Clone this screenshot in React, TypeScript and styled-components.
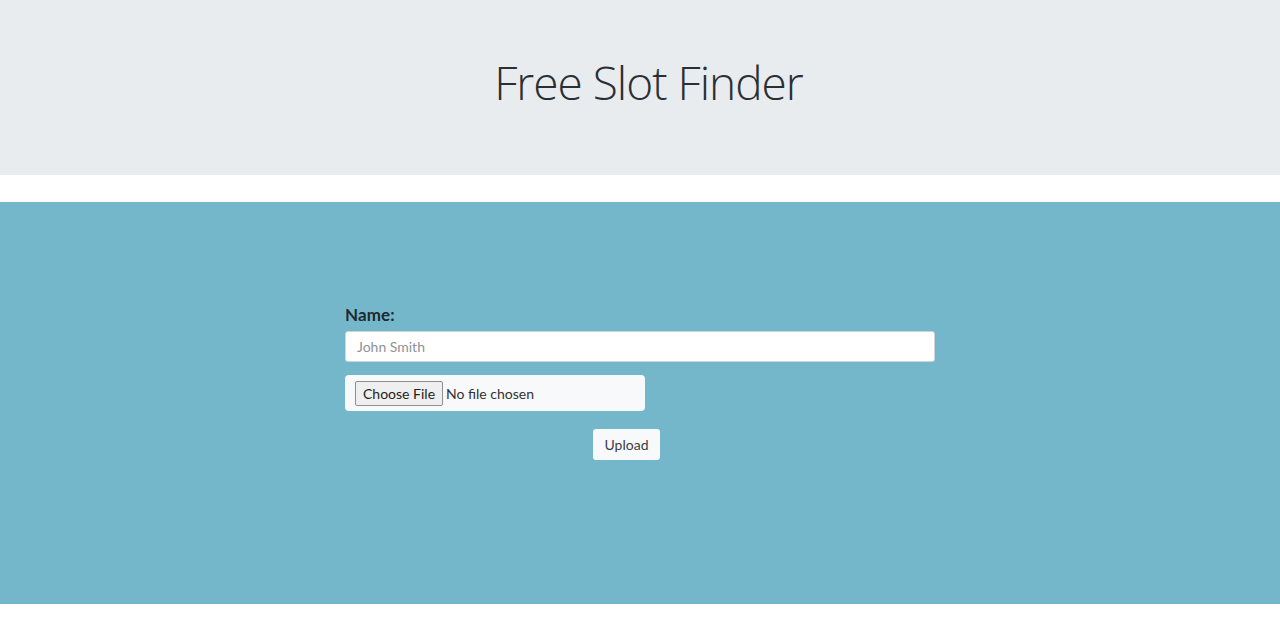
import React from "react";
import styled, { createGlobalStyle } from "styled-components";

const Global = createGlobalStyle`
  html, body { margin: 0; padding: 0; background: #fff; }
  body { font-family: "Lato", "Noto Sans", sans-serif; color: #212529; }
  * { box-sizing: border-box; }
`;

const Page = styled.div`
  display: flex;
  flex-direction: column;
  width: 1280px;
`;

const Jumbotron = styled.header`
  background: #e9ecef;
  height: 175px;
  display: flex;
  align-items: center;
  justify-content: center;
  padding-left: 17px;
  padding-bottom: 10px;
  margin-bottom: 27px;
`;

const Title = styled.h1`
  margin: 0;
  font-family: "Open Sans", sans-serif;
  font-weight: 300;
  font-size: 46px;
  letter-spacing: -1px;
  line-height: 1.2;
  color: #2b2f33;
`;

const Band = styled.section`
  background: #74b7cb;
  height: 402px;
  display: flex;
  justify-content: center;
  padding-top: 100px;
`;

const Form = styled.form`
  width: 590px;
  display: flex;
  flex-direction: column;
`;

const Label = styled.label`
  font-size: 17px;
  font-weight: 700;
  color: #1f2a30;
  line-height: 25px;
  margin-bottom: 4px;
  letter-spacing: 0.1px;
`;

const TextInput = styled.input`
  height: 31px;
  width: 100%;
  border: 1px solid #ced4da;
  border-radius: 3px;
  background: #fff;
  padding: 0 11px;
  font-family: "Lato", "Noto Sans", sans-serif;
  font-size: 14px;
  color: #495057;
  margin-bottom: 13px;
  &::placeholder { color: #8f9398; }
`;

const FileBox = styled.div`
  width: 300px;
  height: 36px;
  background: #f8f9fa;
  border-radius: 4px;
  display: flex;
  align-items: center;
  padding: 0 10px;
  margin-bottom: 18px;
`;

const FileInput = styled.input`
  font-family: "Lato", "Noto Sans", sans-serif;
  font-size: 14px;
  color: #333;
  &::file-selector-button {
    font-family: "Lato", "Noto Sans", sans-serif;
    font-size: 14px;
    color: #222;
    height: 25px;
    padding: 0 7px;
    margin-right: 3px;
    border: 1px solid #8f8f8f;
    border-radius: 2px;
    background: #efefef;
  }
`;

const ButtonRow = styled.div`
  display: flex;
  justify-content: center;
  padding-right: 27px;
`;

const Button = styled.button`
  height: 31px;
  width: 67px;
  background: #f8f9fa;
  border: none;
  border-radius: 3px;
  font-family: "Lato", "Noto Sans", sans-serif;
  font-size: 14px;
  color: #3c4044;
`;

export default function App() {
  return (
    <>
      <Global />
      <Page>
        <Jumbotron>
          <Title>Free Slot Finder</Title>
        </Jumbotron>
        <Band>
          <Form onSubmit={(e) => e.preventDefault()}>
            <Label htmlFor="name">Name:</Label>
            <TextInput id="name" type="text" placeholder="John Smith" />
            <FileBox>
              <FileInput type="file" />
            </FileBox>
            <ButtonRow>
              <Button type="submit">Upload</Button>
            </ButtonRow>
          </Form>
        </Band>
      </Page>
    </>
  );
}
